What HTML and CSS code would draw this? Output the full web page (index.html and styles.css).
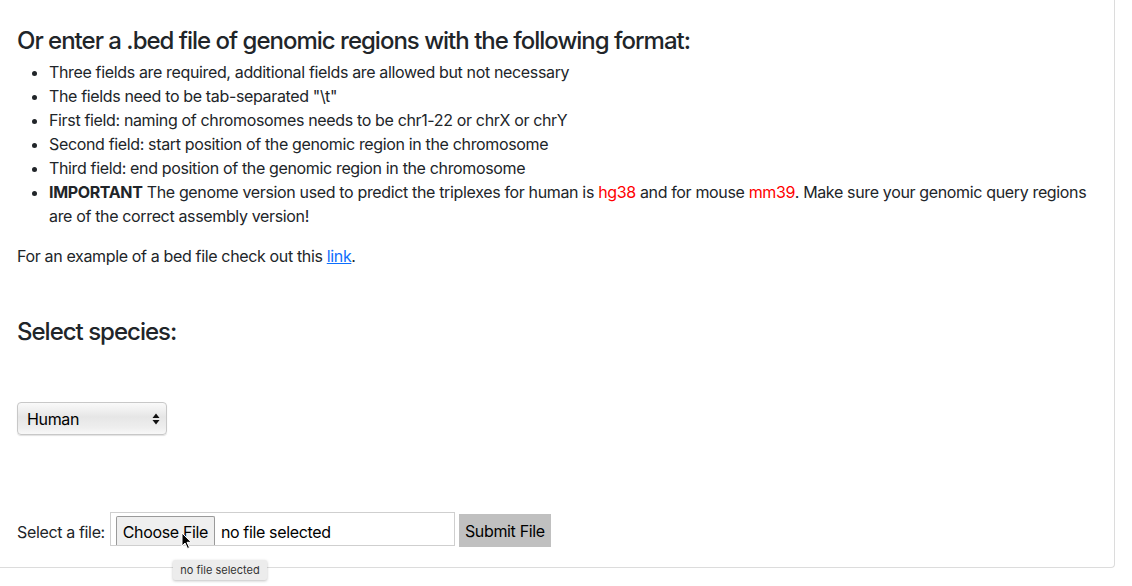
FILE: index.html
```html
<!DOCTYPE html>
<html>
<head>
<meta charset="utf-8">
<link rel="stylesheet" href="styles.css">
</head>
<body>
<div class="card">
  <h4 class="title">Or enter a .bed file of genomic regions with the following format:</h4>
  <ul class="rules">
    <li>Three fields are required, additional fields are allowed but not necessary</li>
    <li>The fields need to be tab-separated "\t"</li>
    <li>First field: naming of chromosomes needs to be chr1-22 or chrX or chrY</li>
    <li>Second field: start position of the genomic region in the chromosome</li>
    <li>Third field: end position of the genomic region in the chromosome</li>
    <li><b>IMPORTANT</b> The genome version used to predict the triplexes for human is <span class="red">hg38</span> and for mouse <span class="red">mm39</span>. Make sure your genomic query regions are of the correct assembly version!</li>
  </ul>
  <p class="example">For an example of a bed file check out this <a href="#">link</a>.</p>
  <h4 class="species">Select species:</h4>
  <div class="select">
    <span>Human</span>
    <svg class="arrows" width="8" height="12" viewBox="0 0 8 12"><path d="M4 0.5 L7.5 5 H0.5 Z M4 11.5 L7.5 7 H0.5 Z" fill="#111"/></svg>
  </div>
  <div class="filerow">
    <span class="label">Select a file:</span>
    <div class="filebox">
      <span class="choose">Choose File</span>
      <span class="nofile">no file selected</span>
    </div>
    <span class="submit">Submit File</span>
  </div>
  <svg class="cursor" width="12" height="18" viewBox="0 0 12 18"><path d="M1 1 L1 14 L4 11 L6.5 16.5 L8.5 15.6 L6 10.3 L10.2 10.3 Z" fill="#000" stroke="#fff" stroke-width="1"/></svg>
  <div class="tooltip">no file selected</div>
</div>
</body>
</html>
```
FILE: styles.css
```css
html, body {
  margin: 0;
  padding: 0;
  background: #fff;
}
body {
  font-family: Inter, "Liberation Sans", Arial, sans-serif;
  font-size: 16px;
  line-height: 24px;
  letter-spacing: -0.35px;
  color: #212529;
  position: relative;
  height: 586px;
  overflow: hidden;
}
.card {
  position: relative;
  width: 1116px;
  height: 568px;
  margin-left: -1px;
  box-sizing: border-box;
  border-right: 1px solid #dcdcdc;
  border-bottom: 1px solid #dcdcdc;
  border-bottom-right-radius: 4px;
  padding: 26px 0 0 18px;
}
.title {
  font-size: 24px;
  font-weight: 500;
  line-height: 29px;
  letter-spacing: -1px;
  margin: 0 0 5px 0;
}
.rules {
  margin: 0 0 16px 0;
  padding-left: 32px;
  padding-right: 20px;
}
.red { color: #ff0000; }
.example { margin: 0; }
a { color: #0d6efd; }
.species {
  font-size: 24px;
  font-weight: 500;
  line-height: 29px;
  letter-spacing: -1px;
  margin: 49px 0 56px 0;
}
.select {
  width: 150px;
  height: 33px;
  box-sizing: border-box;
  border: 1px solid #c8c8c8;
  border-radius: 4px;
  background: linear-gradient(#fafafa, #e6e6e6 45%, #eeeeee 80%, #f8f8f8);
  box-shadow: 0 1px 1px rgba(0,0,0,0.12);
  display: flex;
  align-items: center;
  justify-content: space-between;
  padding: 0 6px 0 9px;
  color: #000;
  font-size: 16px;
}
.filerow {
  display: flex;
  align-items: flex-start;
  margin-top: 77px;
  color: #212529;
}
.label {
  margin-top: 8px;
  margin-right: 5px;
}
.filebox {
  width: 345px;
  height: 34px;
  box-sizing: border-box;
  border: 1px solid #cfcfcf;
  display: flex;
  align-items: flex-end;
  padding-left: 5px;
}
.choose {
  height: 29px;
  width: 99px;
  box-sizing: border-box;
  border: 1px solid #9a9a9a;
  border-bottom: none;
  background: #efefef;
  text-align: center;
  line-height: 30px;
  color: #000;
  border-radius: 2px 2px 0 0;
}
.nofile {
  line-height: 26px;
  margin-left: 6px;
  color: #000;
}
.submit {
  margin-left: 4px;
  height: 33px;
  width: 92px;
  box-sizing: border-box;
  background: #c0c0c0;
  color: #000;
  text-align: center;
  line-height: 34px;
  margin-top: 2px;
}
.cursor {
  position: absolute;
  left: 182px;
  top: 532px;
}
.tooltip {
  position: absolute;
  left: 174px;
  top: 560px;
  width: 94px;
  height: 20px;
  box-sizing: border-box;
  background: #ececec;
  border-radius: 2px;
  box-shadow: 0 1px 3px rgba(0,0,0,0.25);
  font-size: 11px;
  line-height: 20px;
  letter-spacing: 0;
  text-align: center;
  color: #333;
}
```
